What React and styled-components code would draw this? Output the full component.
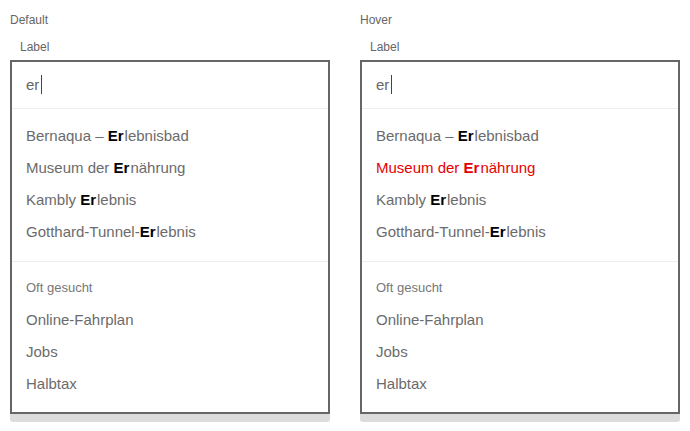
import React from 'react';
import styled, { createGlobalStyle } from 'styled-components';

const GlobalStyle = createGlobalStyle`
  body {
    margin: 0;
    background: #fff;
    font-family: "Liberation Sans", Arial, sans-serif;
  }
`;

const Page = styled.div`
  display: flex;
  gap: 30px;
  padding: 12px 10px 10px;
`;

const Column = styled.section`
  width: 320px;
  display: flex;
  flex-direction: column;
`;

const StateTitle = styled.div`
  font-size: 12px;
  line-height: 16px;
  color: #666;
`;

const FieldLabel = styled.div`
  font-size: 12px;
  line-height: 16px;
  color: #666;
  margin: 11px 0 5px 10px;
`;

const Box = styled.div`
  border: 2px solid #666;
  background: #fff;
`;

// grey ledge below the open dropdown
const Ledge = styled.div`
  height: 8px;
  background: #dcdcdc;
  border-radius: 0 0 3px 3px;
`;

const InputRow = styled.div`
  height: 44px;
  display: flex;
  align-items: center;
  padding: 0 14px 2px;
  font-size: 15px;
  color: #666;
  border-bottom: 1px solid #eee;
`;

const Caret = styled.span`
  display: inline-block;
  width: 1px;
  height: 19px;
  background: #444;
  margin-left: 2px;
`;

const Group = styled.ul`
  list-style: none;
  margin: 0;
  padding: ${({ $top }) => $top}px 0 ${({ $bottom }) => $bottom}px;
  border-bottom: ${({ $last }) => ($last ? 'none' : '1px solid #eee')};
`;

const GroupTitle = styled.li`
  font-size: 13px;
  line-height: 20px;
  color: #777;
  padding: 0 14px;
  margin-bottom: 6px;
`;

const Item = styled.li`
  font-size: 15px;
  line-height: 32px;
  padding: 0 14px;
  color: ${({ $hover }) => ($hover ? '#e60000' : '#6b6b6b')};

  strong {
    font-weight: 700;
    margin-right: 1px;
    color: ${({ $hover }) => ($hover ? '#e60000' : '#000')};
  }
`;

const results = [
  ['Bernaqua – ', 'Er', 'lebnisbad'],
  ['Museum der ', 'Er', 'nährung'],
  ['Kambly ', 'Er', 'lebnis'],
  ['Gotthard-Tunnel-', 'Er', 'lebnis'],
];

const popular = ['Online-Fahrplan', 'Jobs', 'Halbtax'];

const Autocomplete = ({ title, hoverIndex }) => (
  <Column>
    <StateTitle>{title}</StateTitle>
    <FieldLabel>Label</FieldLabel>
    <Box>
      <InputRow>
        er
        <Caret />
      </InputRow>
      <Group $top={11} $bottom={13}>
        {results.map(([pre, match, post], i) => (
          <Item key={pre} $hover={i === hoverIndex}>
            {pre}
            <strong>{match}</strong>
            {post}
          </Item>
        ))}
      </Group>
      <Group $top={16} $bottom={12} $last>
        <GroupTitle>Oft gesucht</GroupTitle>
        {popular.map((p) => (
          <Item key={p}>{p}</Item>
        ))}
      </Group>
    </Box>
    <Ledge />
  </Column>
);

const App = () => (
  <>
    <GlobalStyle />
    <Page>
      <Autocomplete title="Default" />
      <Autocomplete title="Hover" hoverIndex={1} />
    </Page>
  </>
);

export default App;
